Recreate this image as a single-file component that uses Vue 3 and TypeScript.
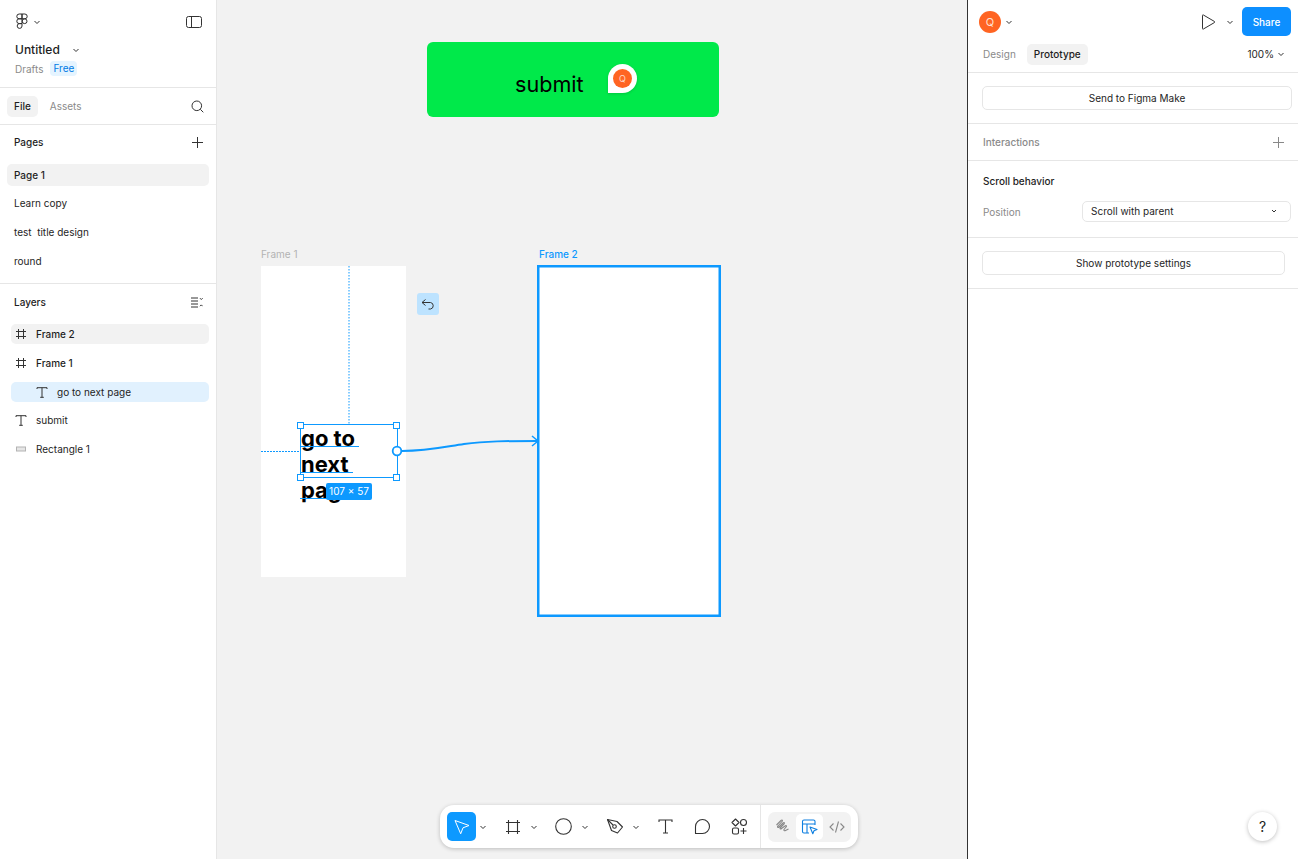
<script setup lang="ts">
const pages = [
  { name: 'Page 1', active: true },
  { name: 'Learn copy', active: false },
  { name: 'test  title design', active: false },
  { name: 'round', active: false },
]

const layers = [
  { name: 'Frame 2', icon: 'frame', state: 'hover', bold: true, child: false },
  { name: 'Frame 1', icon: 'frame', state: '', bold: true, child: false },
  { name: 'go to next page', icon: 'text', state: 'selected', bold: false, child: true },
  { name: 'submit', icon: 'text', state: '', bold: false, child: false },
  { name: 'Rectangle 1', icon: 'rect', state: '', bold: false, child: false },
]
</script>

<template>
  <div class="app">
    <aside class="left">
      <header class="file-head">
        <div class="logo-row">
          <div class="logo-wrap">
            <svg class="logo" width="12" height="17" viewBox="0 0 12 17" fill="none" stroke="#2c2c2c" stroke-width="1">
              <path d="M6 1H3.2a2.4 2.4 0 0 0 0 4.8H6V1Z" />
              <path d="M6 1h2.8a2.4 2.4 0 0 1 0 4.8H6V1Z" />
              <path d="M6 5.8H3.2a2.4 2.4 0 0 0 0 4.8H6V5.8Z" />
              <circle cx="8.600" cy="8.200" r="2.400" />
              <path d="M6 10.600H3.400a2.400 2.400 0 1 0 2.600 2.400v-2.400Z" />
            </svg>
            <svg class="caret" width="8" height="8" viewBox="0 0 8 8"><path d="M1.500 3 4 5.500 6.500 3" /></svg>
          </div>
          <svg width="16" height="12" viewBox="0 0 16 12" fill="none" stroke="#333" stroke-width="1">
            <rect x="0.500" y="0.500" width="15" height="11" rx="2" />
            <path d="M5.500 0.500v11" />
          </svg>
        </div>
        <div class="title-row">
          <span class="title">Untitled</span>
          <svg class="caret" width="8" height="8" viewBox="0 0 8 8"><path d="M1.500 3 4 5.500 6.500 3" /></svg>
        </div>
        <div class="plan-row">
          <span class="muted">Drafts</span>
          <span class="badge">Free</span>
        </div>
      </header>

      <div class="tabs">
        <span class="pill strong">File</span>
        <span class="tab-idle">Assets</span>
        <svg class="search" width="13" height="13" viewBox="0 0 13 13" fill="none" stroke="#333" stroke-width="1">
          <circle cx="5.800" cy="5.800" r="4.800" />
          <path d="m9.300 9.300 3 3" />
        </svg>
      </div>

      <section class="pages">
        <div class="sec-head">
          <span class="strong">Pages</span>
          <svg width="11" height="11" viewBox="0 0 11 11" stroke="#333" stroke-width="1"><path d="M5.500 0v11M0 5.500h11" /></svg>
        </div>
        <div
          v-for="page in pages"
          :key="page.name"
          :class="['page-row', { 'page-row--active': page.active }]"
        >
          {{ page.name }}
        </div>
      </section>

      <section class="layers">
        <div class="sec-head">
          <span class="strong">Layers</span>
          <svg width="12" height="11" viewBox="0 0 12 11" fill="none" stroke="#333" stroke-width="1">
            <path d="M0 1h7M0 4h7M0 7h7M0 10h7" />
            <path d="m9 1.200 1.300 1.300 1.300-1.300M9 9.200l1.300-1.300 1.300 1.300" />
          </svg>
        </div>
        <div
          v-for="layer in layers"
          :key="layer.name"
          :class="['layer-row', layer.state && 'layer-row--' + layer.state, { 'layer-row--child': layer.child }]"
        >
          <span class="layer-icon">
            <svg v-if="layer.icon === 'frame'" width="10" height="10" viewBox="0 0 10 10" stroke="#333" stroke-width="1">
              <path d="M2.500 0v10M7.500 0v10M0 2.500h10M0 7.500h10" />
            </svg>
            <svg v-else-if="layer.icon === 'text'" width="12" height="11" viewBox="0 0 12 11" fill="none" stroke="#333" stroke-width="1">
              <path d="M1 2V0.700h10V2M6 0.700v9.600M4.200 10.300h3.600" />
            </svg>
            <svg v-else width="10" height="6" viewBox="0 0 10 6" fill="#e6e6e6" stroke="#b3b3b3" stroke-width="1">
              <rect x="0.500" y="1" width="9" height="4" />
            </svg>
          </span>
          <span :class="{ strong: layer.bold }">{{ layer.name }}</span>
        </div>
      </section>
    </aside>

    <main class="canvas">
      <div class="rect-green"></div>
      <span class="submit-text">submit</span>
      <div class="pin"><span class="pin-face">Q</span></div>

      <span class="frame-label">Frame 1</span>
      <div class="frame-one"></div>
      <span class="frame-label frame-label--on">Frame 2</span>
      <div class="frame-two"></div>

      <div class="back-btn">
        <svg width="14" height="11" viewBox="0 0 14 11" fill="none" stroke="#333" stroke-width="1">
          <path d="M4.500 0.500 1 3.500l3.500 3M1 3.500h8.500a3.300 3.300 0 0 1 0 6.500H7.500" />
        </svg>
      </div>

      <div class="text-layer">go to next page</div>

      <svg class="overlay" width="750" height="859" viewBox="217 0 750 859" fill="none">
        <rect x="538.250" y="266.250" width="181.500" height="349.500" stroke="#0d99ff" stroke-width="2.500" />
        <path d="M349 266v158" stroke="#0d99ff" stroke-dasharray="1.500 1.500" />
        <path d="M261 451.500h39" stroke="#0d99ff" stroke-dasharray="2 1" />
        <path d="M300 446.500h59M300 472.500h53M300 498.500h30" stroke="#0d99ff" />
        <rect x="300.500" y="424.500" width="97" height="53" stroke="#0d99ff" />
        <g fill="#fff" stroke="#0d99ff">
          <rect x="297.500" y="422.500" width="6" height="6" />
          <rect x="393.500" y="422.500" width="6" height="6" />
          <rect x="297.500" y="474.500" width="6" height="6" />
          <rect x="393.500" y="474.500" width="6" height="6" />
        </g>
        <path d="M402 451c25 0 42-4 62-7 22-3 42-3 73-3" stroke="#0d99ff" stroke-width="2" />
        <path d="m532 436 6 5-6 5" stroke="#0d99ff" stroke-width="1.500" />
        <circle cx="397" cy="451" r="4.300" fill="#fff" stroke="#0d99ff" stroke-width="1.800" />
      </svg>

      <span class="size-tag">107 × 57</span>

      <div class="toolbar">
        <div class="tool-group">
          <span class="tool tool--active">
            <svg width="18" height="18" viewBox="0 0 18 18" fill="none" stroke="#fff" stroke-width="1">
              <path d="M2 2.500 16 7.500l-6 2.300-2.300 6L2 2.500Z" stroke-linejoin="round" />
            </svg>
          </span>
          <svg class="caret tool-caret" width="8" height="8" viewBox="0 0 8 8"><path d="M1.500 3 4 5.500 6.500 3" /></svg>
        </div>
        <div class="tool-group">
          <span class="tool">
            <svg width="16" height="16" viewBox="0 0 16 16" stroke="#333" stroke-width="1.100">
              <path d="M3.500 1v14M12.500 1v14M1 3.500h14M1 12.500h14" />
            </svg>
          </span>
          <svg class="caret tool-caret" width="8" height="8" viewBox="0 0 8 8"><path d="M1.500 3 4 5.500 6.500 3" /></svg>
        </div>
        <div class="tool-group">
          <span class="tool">
            <svg width="17" height="17" viewBox="0 0 17 17" fill="none" stroke="#333" stroke-width="1.100"><circle cx="8.500" cy="8.500" r="7.800" /></svg>
          </span>
          <svg class="caret tool-caret" width="8" height="8" viewBox="0 0 8 8"><path d="M1.500 3 4 5.500 6.500 3" /></svg>
        </div>
        <div class="tool-group">
          <span class="tool">
            <svg width="18" height="18" viewBox="0 0 18 18" fill="none" stroke="#333" stroke-width="1.100">
              <path d="M1.500 1.500 11 3.500l5.500 5.500-5 6-6-2.500-4-11Z" stroke-linejoin="round" />
              <path d="M1.500 1.500 7 7" />
              <circle cx="8.500" cy="8.500" r="1.800" />
            </svg>
          </span>
          <svg class="caret tool-caret" width="8" height="8" viewBox="0 0 8 8"><path d="M1.500 3 4 5.500 6.500 3" /></svg>
        </div>
        <span class="tool">
          <svg width="15" height="15" viewBox="0 0 15 15" fill="none" stroke="#333" stroke-width="1.100">
            <path d="M1 3V1h13v2M7.500 1v13M5 14h5" />
          </svg>
        </span>
        <span class="tool">
          <svg width="17" height="17" viewBox="0 0 17 17" fill="none" stroke="#333" stroke-width="1.100">
            <path d="M1.500 15.500V8.500a7 7 0 1 1 7 7h-7Z" stroke-linejoin="round" />
          </svg>
        </span>
        <span class="tool">
          <svg width="17" height="17" viewBox="0 0 17 17" fill="none" stroke="#333" stroke-width="1.100">
            <path d="M4.500 1 8 4.500 4.500 8 1 4.500 4.500 1Z" stroke-linejoin="round" />
            <circle cx="12.500" cy="4.500" r="3" />
            <rect x="1.500" y="10" width="6" height="6" rx="1.500" />
            <path d="M12.500 10v6M9.500 13h6" />
          </svg>
        </span>
        <span class="tool-divider"></span>
        <div class="modes">
          <span class="mode">
            <svg width="15" height="15" viewBox="0 0 15 15" fill="none" stroke="#888" stroke-width="1.100">
              <path d="M1.500 6 6 1.500c1-1 2 0 1 1L3 7c-1 1 0 2 1 1l4-4c1-1 2 0 1 1l-3.500 3.500c-1 1 0 2 1 1L10 7c1-1 2 0 1 1l-2 2.500c-.5 1 .5 1.500 1.500 1L13.500 10" stroke-linejoin="round" />
            </svg>
          </span>
          <span class="mode mode--active">
            <svg width="17" height="17" viewBox="0 0 17 17" fill="none" stroke="#0d7fe0" stroke-width="1.100">
              <path d="M8 15H3a1.500 1.500 0 0 1-1.500-1.500v-10A1.500 1.500 0 0 1 3 2h9.500A1.500 1.500 0 0 1 14 3.500V7M1.500 6H14M6 6v9" />
              <path d="m9 9 7 2.500-3 1.200-1.200 3L9 9Z" stroke-linejoin="round" />
            </svg>
          </span>
          <span class="mode">
            <svg width="16" height="14" viewBox="0 0 16 14" fill="none" stroke="#888" stroke-width="1.100">
              <path d="M4.500 3.500 1 7l3.500 3.500M11.500 3.500 15 7l-3.500 3.500M9.500 1.500l-3 11" />
            </svg>
          </span>
        </div>
      </div>
    </main>

    <aside class="right">
      <header class="right-top">
        <div class="avatar-wrap">
          <span class="avatar">Q</span>
          <svg class="caret" width="8" height="8" viewBox="0 0 8 8"><path d="M1.500 3 4 5.500 6.500 3" /></svg>
        </div>
        <div class="share-wrap">
          <svg width="15" height="16" viewBox="0 0 15 16" fill="none" stroke="#333" stroke-width="1">
            <path d="M1.500 1.500v13a.6.6 0 0 0 .9.5L13.500 8.500a.6.6 0 0 0 0-1L2.400 1a.6.6 0 0 0-.9.5Z" />
          </svg>
          <svg class="caret play-caret" width="8" height="8" viewBox="0 0 8 8"><path d="M1.500 3 4 5.500 6.500 3" /></svg>
          <button class="share">Share</button>
        </div>
      </header>
      <div class="right-tabs">
        <span class="tab-idle">Design</span>
        <span class="pill strong">Prototype</span>
        <span class="zoom">100%
          <svg class="caret" width="8" height="8" viewBox="0 0 8 8"><path d="M1.500 3 4 5.500 6.500 3" /></svg>
        </span>
      </div>

      <section class="make-sec">
        <button class="wide-btn">Send to Figma Make</button>
      </section>

      <section class="inter-sec">
        <span class="muted strong-ish">Interactions</span>
        <svg width="11" height="11" viewBox="0 0 11 11" stroke="#888" stroke-width="1"><path d="M5.500 0v11M0 5.500h11" /></svg>
      </section>

      <section class="scroll-sec">
        <div class="strong">Scroll behavior</div>
        <div class="pos-row">
          <span class="muted">Position</span>
          <div class="select">
            <span>Scroll with parent</span>
            <svg class="caret" width="8" height="8" viewBox="0 0 8 8"><path d="M2 3 4 5 6 3" /></svg>
          </div>
        </div>
      </section>

      <section class="proto-sec">
        <button class="wide-btn">Show prototype settings</button>
      </section>

      <button class="help">?</button>
    </aside>
  </div>
</template>

<style scoped>
.app {
  display: flex;
  width: 1298px;
  height: 859px;
  overflow: hidden;
  font-family: Inter, "Liberation Sans", sans-serif;
  font-size: 10px;
  color: #1e1e1e;
  background: #f2f2f2;
}

.left {
  flex: none;
  width: 216px;
  background: #fff;
  border-right: 1px solid #e6e6e6;
}

.file-head {
  height: 88px;
  box-sizing: border-box;
  padding: 13px 14px 0 15px;
  border-bottom: 1px solid #e6e6e6;
}

.logo-row {
  display: flex;
  justify-content: space-between;
  align-items: center;
  height: 17px;
}

.logo-wrap {
  display: flex;
  align-items: center;
  gap: 5px;
  padding-left: 1px;
}

.caret {
  flex: none;
  fill: none;
  stroke: #333;
  stroke-width: 1;
}

.title-row {
  display: flex;
  align-items: center;
  gap: 12px;
  margin-top: 12px;
}

.title {
  font-size: 12px;
  font-weight: 500;
  line-height: 16px;
}

.plan-row {
  display: flex;
  align-items: center;
  gap: 7px;
  margin-top: 3px;
}

.muted {
  color: #8a8a8a;
}

.strong-ish {
  font-weight: 500;
}

.badge {
  padding: 1px 3px;
  border-radius: 4px;
  background: #e5f4ff;
  color: #007be5;
  line-height: 13px;
}

.tabs {
  display: flex;
  align-items: center;
  height: 36px;
  padding: 0 12px 0 7px;
  border-bottom: 1px solid #e6e6e6;
}

.pill {
  padding: 0 7px;
  height: 21px;
  line-height: 21px;
  border-radius: 5px;
  background: #f2f2f2;
}

.strong {
  font-weight: 500;
}

.tab-idle {
  color: #8a8a8a;
  padding: 0 8px;
}

.tabs .tab-idle {
  margin-left: 4px;
}

.search {
  margin-left: auto;
}

.sec-head {
  display: flex;
  justify-content: space-between;
  align-items: center;
  height: 36px;
  padding: 0 13px 0 14px;
}

.pages {
  height: 158px;
  border-bottom: 1px solid #e6e6e6;
}

.pages .sec-head {
  height: 34px;
  margin-bottom: 5px;
}

.page-row {
  height: 22px;
  line-height: 22px;
  margin: 0 7px 7px;
  padding: 0 7px;
  border-radius: 5px;
  white-space: pre;
}

.page-row--active {
  margin-bottom: 6px;
  background: #f2f2f2;
  font-weight: 500;
}

.layers .sec-head {
  margin-bottom: 4px;
}

.layer-row {
  display: flex;
  align-items: center;
  height: 20px;
  margin: 0 7px 9px 11px;
  border-radius: 5px;
}

.layer-row--hover {
  background: #f2f2f2;
}

.layer-row--selected {
  margin-bottom: 8px;
  background: #e1f1fe;
}

.layer-row--child {
  padding-left: 21px;
}

.layer-icon {
  display: flex;
  align-items: center;
  justify-content: center;
  width: 20px;
  margin-right: 5px;
}

.canvas {
  flex: none;
  position: relative;
  width: 750px;
  height: 859px;
  background: #f2f2f2;
  border-right: 1px solid #333;
}

.rect-green {
  position: absolute;
  left: 210px;
  top: 42px;
  width: 292px;
  height: 75px;
  border-radius: 6px;
  background: #00e94a;
}

.submit-text {
  position: absolute;
  left: 298px;
  top: 71px;
  font-size: 21.600px;
  line-height: 27px;
  color: #000;
}

.pin {
  position: absolute;
  left: 391px;
  top: 64px;
  width: 29px;
  height: 29px;
  box-sizing: border-box;
  padding: 5px;
  border-radius: 50% 50% 50% 0;
  background: #fff;
  box-shadow: 0 1px 3px rgba(0, 0, 0, 0.15);
}

.pin-face {
  display: block;
  width: 19px;
  height: 19px;
  border-radius: 50%;
  background: #ff6422;
  color: #ffd9c7;
  font-size: 9px;
  line-height: 19px;
  text-align: center;
}

.frame-label {
  position: absolute;
  left: 44px;
  top: 248px;
  line-height: 12px;
  color: #b3b3b3;
}

.frame-label--on {
  left: 322px;
  color: #0d99ff;
  font-weight: 500;
}

.frame-one {
  position: absolute;
  left: 44px;
  top: 266px;
  width: 145px;
  height: 311px;
  background: #fff;
}

.frame-two {
  position: absolute;
  left: 320px;
  top: 265px;
  width: 184px;
  height: 352px;
  background: #fff;
}

.back-btn {
  position: absolute;
  left: 200px;
  top: 293px;
  display: flex;
  align-items: center;
  justify-content: center;
  width: 22px;
  height: 22px;
  border-radius: 3px;
  background: #bde3ff;
}

.text-layer {
  position: absolute;
  left: 84px;
  top: 425px;
  width: 97px;
  font-size: 22px;
  line-height: 26px;
  font-weight: 700;
  color: #000;
}

.overlay {
  position: absolute;
  left: 0;
  top: 0;
  pointer-events: none;
}

.size-tag {
  position: absolute;
  left: 109px;
  top: 483px;
  width: 46px;
  height: 17px;
  border-radius: 2px;
  background: #0d99ff;
  color: #fff;
  line-height: 17px;
  text-align: center;
}

.toolbar {
  position: absolute;
  left: 223px;
  top: 805px;
  display: flex;
  align-items: center;
  gap: 8px;
  width: 418px;
  height: 43px;
  box-sizing: border-box;
  padding: 0 7px;
  border-radius: 14px;
  background: #fff;
  box-shadow: 0 1px 4px rgba(0, 0, 0, 0.22);
}

.tool-group {
  display: flex;
  flex: none;
  align-items: center;
  width: 43px;
}

.tool {
  display: flex;
  flex: none;
  align-items: center;
  justify-content: center;
  width: 29px;
  height: 29px;
  border-radius: 5px;
}

.tool--active {
  background: #0d99ff;
}

.tool-caret {
  margin-left: 3px;
}

.tool-divider {
  flex: none;
  align-self: stretch;
  width: 1px;
  margin-left: -2px;
  background: #e6e6e6;
}

.modes {
  display: flex;
  flex: none;
  align-items: center;
  height: 30px;
  margin-left: -1px;
  padding: 0 1px;
  border-radius: 7px;
  background: #f2f2f2;
}

.mode {
  display: flex;
  align-items: center;
  justify-content: center;
  width: 27px;
  height: 26px;
  border-radius: 5px;
}

.mode--active {
  background: #fff;
}

.right {
  flex: 1;
  position: relative;
  background: #fff;
}

.right-top {
  display: flex;
  justify-content: space-between;
  align-items: center;
  height: 29px;
  padding: 7px 7px 0 11px;
}

.avatar-wrap {
  display: flex;
  align-items: center;
  gap: 4px;
}

.avatar {
  width: 22px;
  height: 22px;
  border-radius: 50%;
  background: #ff6422;
  color: #ffe0d2;
  font-size: 11px;
  line-height: 22px;
  text-align: center;
}

.share-wrap {
  display: flex;
  align-items: center;
}

.play-caret {
  margin: 0 8px 0 10px;
}

.share {
  width: 49px;
  height: 29px;
  padding: 0;
  border: 0;
  border-radius: 5px;
  background: #0d8fff;
  color: #fff;
  font: 500 10px Inter, "Liberation Sans", sans-serif;
}

.right-tabs {
  display: flex;
  align-items: center;
  height: 22px;
  margin-top: 7px;
  padding: 0 13px 7px 7px;
  border-bottom: 1px solid #e6e6e6;
}

.right-tabs .tab-idle {
  margin-right: 3px;
}

.zoom {
  display: flex;
  align-items: center;
  gap: 3px;
  margin-left: auto;
}

.make-sec {
  height: 51px;
  box-sizing: border-box;
  padding: 13px 6px 0 14px;
  border-bottom: 1px solid #e6e6e6;
}

.wide-btn {
  display: block;
  width: 100%;
  height: 24px;
  padding: 0;
  border: 1px solid #e6e6e6;
  border-radius: 5px;
  background: #fff;
  color: #1e1e1e;
  font: 400 10px Inter, "Liberation Sans", sans-serif;
}

.inter-sec {
  display: flex;
  justify-content: space-between;
  align-items: center;
  height: 36px;
  padding: 0 14px 0 15px;
  border-bottom: 1px solid #e6e6e6;
}

.scroll-sec {
  height: 77px;
  padding: 14px 7px 0 15px;
  border-bottom: 1px solid #e6e6e6;
  box-sizing: border-box;
}

.pos-row {
  display: flex;
  justify-content: space-between;
  align-items: center;
  margin-top: 14px;
}

.select {
  display: flex;
  justify-content: space-between;
  align-items: center;
  box-sizing: border-box;
  width: 209px;
  height: 21px;
  padding: 0 12px 1px 8px;
  border: 1px solid #e6e6e6;
  border-radius: 5px;
}

.proto-sec {
  height: 51px;
  box-sizing: border-box;
  padding: 13px 13px 0 14px;
  border-bottom: 1px solid #e6e6e6;
}

.help {
  position: absolute;
  right: 21px;
  bottom: 18px;
  width: 29px;
  height: 29px;
  padding: 0;
  border: 0;
  border-radius: 50%;
  background: #fff;
  box-shadow: 0 1px 4px rgba(0, 0, 0, 0.25);
  color: #1e1e1e;
  font: 400 14px Inter, "Liberation Sans", sans-serif;
}
</style>

<style>
html,
body {
  margin: 0;
  overflow: hidden;
}
</style>
